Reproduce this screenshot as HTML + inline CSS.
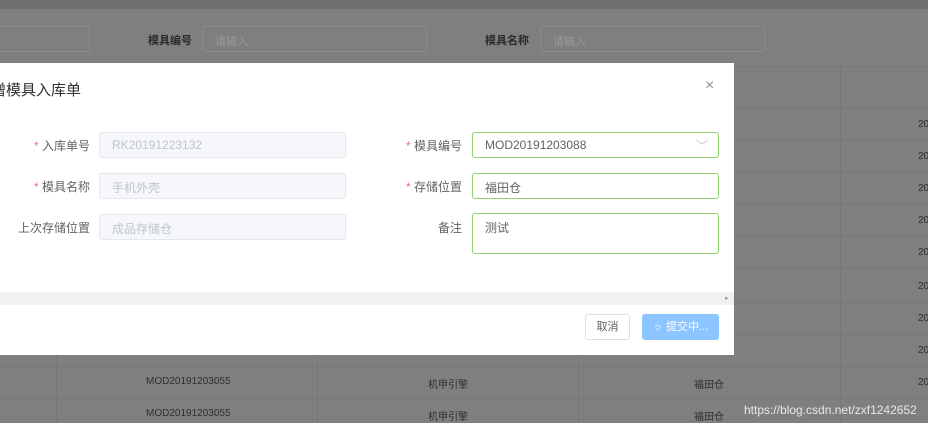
<!DOCTYPE html>
<html><head><meta charset="utf-8"><style>
*{box-sizing:border-box;margin:0;padding:0}
body{width:928px;height:423px;overflow:hidden;background:#7f7f7f;font-family:"Liberation Sans","Noto Sans CJK SC",sans-serif;position:relative;font-size:12px}
.a{position:absolute}
.top{left:0;top:0;width:928px;height:9px;background:#6f6f6f}
.sin{border:1px solid #8c8c8c;border-radius:3px;height:26px;background:#7f7f7f;color:#9a9a9a;font-size:11px;padding:6px 12px}
.lbl{color:#2a2a2a;font-size:11px;font-weight:bold}
.vl{width:1px;background:#777}
.hl{height:1px;background:#777;left:0;width:928px}
.cell{color:#2f2f2f;font-size:10px}
.dlg{left:0;top:63px;width:734px;height:292px;background:#fff}
.fl{color:#606266;font-size:12px;text-align:right}
.st{color:#f56c6c}
.inp{border:1px solid #e4e7ed;background:#f5f7fa;border-radius:3px;height:26px;color:#c0c4cc;padding:5px 12px;font-size:12px}
.gin{border:1.5px solid #8fd16a;background:#fff;border-radius:3px;height:26px;color:#606266;padding:5px 12px;font-size:12px}
</style></head><body>
<div class="a top"></div>
<div class="a sin" style="left:-10px;top:26px;width:100px"></div>
<div class="a lbl" style="left:148px;top:32px">模具编号</div>
<div class="a sin" style="left:202px;top:26px;width:225px">请输入</div>
<div class="a lbl" style="left:485px;top:32px">模具名称</div>
<div class="a sin" style="left:540px;top:26px;width:225px">请输入</div>
<div class="a vl" style="left:840px;top:66px;height:357px"></div>
<div class="a vl" style="left:56px;top:355px;height:68px"></div>
<div class="a vl" style="left:317px;top:355px;height:68px"></div>
<div class="a vl" style="left:578px;top:355px;height:68px"></div>
<div class="a hl" style="top:66px"></div>
<div class="a hl" style="top:108px"></div>
<div class="a hl" style="top:140px"></div>
<div class="a hl" style="top:172px"></div>
<div class="a hl" style="top:204px"></div>
<div class="a hl" style="top:236px"></div>
<div class="a hl" style="top:268px"></div>
<div class="a hl" style="top:302px"></div>
<div class="a hl" style="top:334px"></div>
<div class="a hl" style="top:366px"></div>
<div class="a hl" style="top:398px"></div>
<div class="a cell" style="left:918px;top:119px">20</div>
<div class="a cell" style="left:918px;top:151px">20</div>
<div class="a cell" style="left:918px;top:183px">20</div>
<div class="a cell" style="left:918px;top:215px">20</div>
<div class="a cell" style="left:918px;top:247px">20</div>
<div class="a cell" style="left:918px;top:281px">20</div>
<div class="a cell" style="left:918px;top:313px">20</div>
<div class="a cell" style="left:918px;top:345px">20</div>
<div class="a cell" style="left:918px;top:377px">20</div>
<div class="a cell" style="left:146px;top:376px">MOD20191203055</div>
<div class="a cell" style="left:428px;top:376px">机甲引擎</div>
<div class="a cell" style="left:694px;top:376px">福田仓</div>
<div class="a cell" style="left:146px;top:408px">MOD20191203055</div>
<div class="a cell" style="left:428px;top:408px">机甲引擎</div>
<div class="a cell" style="left:694px;top:408px">福田仓</div>
<div class="a" style="left:744px;top:403px;color:#e8e8e8;font-size:12px">https://blog.csdn.net/zxf1242652</div>
<div class="a dlg">
  <div class="a" style="left:-9px;top:16px;font-size:15px;color:#303133">增模具入库单</div>
  <div class="a" style="left:705px;top:14px;font-size:16px;color:#909399">×</div>
  <div class="a fl" style="left:0;top:74px;width:90px"><span class="st">*</span> 入库单号</div>
  <div class="a inp" style="left:99px;top:69px;width:247px">RK20191223132</div>
  <div class="a fl" style="left:0;top:115px;width:90px"><span class="st">*</span> 模具名称</div>
  <div class="a inp" style="left:99px;top:110px;width:247px">手机外壳</div>
  <div class="a fl" style="left:0;top:156px;width:90px">上次存储位置</div>
  <div class="a inp" style="left:99px;top:151px;width:247px">成品存储仓</div>
  <div class="a fl" style="left:372px;top:74px;width:90px"><span class="st">*</span> 模具编号</div>
  <div class="a gin" style="left:472px;top:69px;width:247px">MOD20191203088<span style="position:absolute;right:10px;top:4px;color:#c0c4cc">﹀</span></div>
  <div class="a fl" style="left:372px;top:115px;width:90px"><span class="st">*</span> 存储位置</div>
  <div class="a gin" style="left:472px;top:110px;width:247px">福田仓</div>
  <div class="a fl" style="left:372px;top:156px;width:90px">备注</div>
  <div class="a gin" style="left:472px;top:150px;width:247px;height:41px">测试</div>
  <div class="a" style="left:0;top:229px;width:734px;height:13px;background:#f1f1f1"></div>
  <div class="a" style="left:725px;top:231px;font-size:7px;color:#999">▸</div>
  <div class="a" style="left:585px;top:251px;width:45px;height:26px;border:1px solid #dcdfe6;border-radius:3px;color:#606266;font-size:11px;text-align:center;line-height:24px">取消</div>
  <div class="a" style="left:642px;top:251px;width:77px;height:26px;background:#8cc5ff;border-radius:3px;color:#fff;font-size:11px;text-align:center;line-height:26px">☼ 提交中...</div>
</div>
</body></html>
